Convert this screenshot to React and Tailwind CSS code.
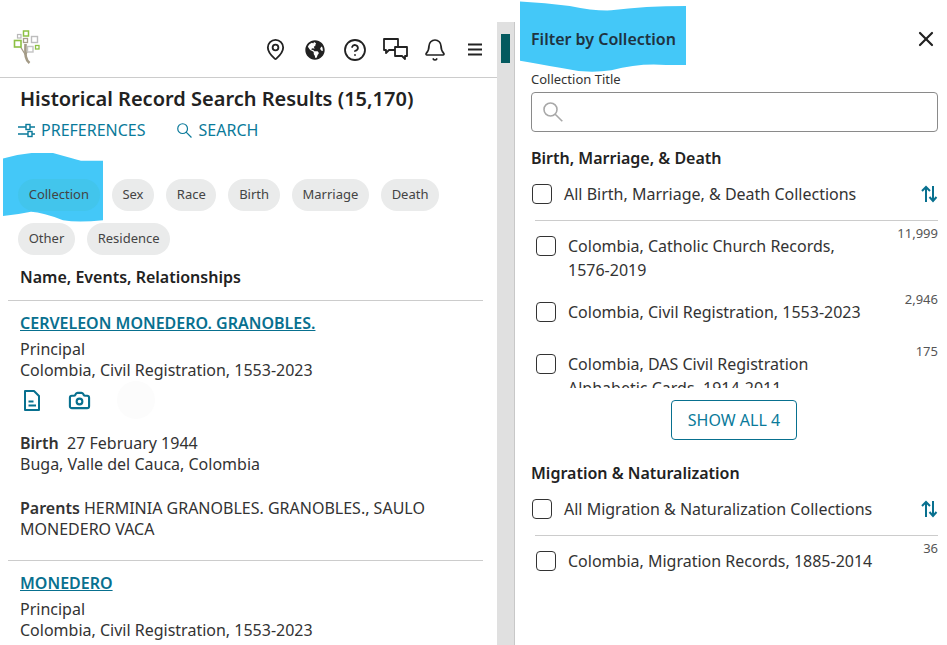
import { Bell, Camera, CircleHelp, MapPin, X } from 'lucide-react'
import { FaGlobeAmericas } from 'react-icons/fa'

const chipRows = [
  ['Collection', 'Sex', 'Race', 'Birth', 'Marriage', 'Death'],
  ['Other', 'Residence'],
]

function TreeLogo() {
  return (
    <svg width="28" height="34" viewBox="0 0 28 34" fill="none" className="mb-[5px]">
      <path d="M16.5 33C11.5 29 12.5 23 12.5 14" stroke="#a39a86" strokeWidth="2.6" />
      <path d="M12.5 25L7 16M13 24l3-5" stroke="#a39a86" strokeWidth="1.3" />
      <rect x="1.5" y="10.5" width="6.5" height="6.5" fill="white" stroke="#8dc044" strokeWidth="1.6" />
      <rect x="4.5" y="4.5" width="3.5" height="3.5" stroke="#b9b9b9" strokeWidth="1.2" />
      <rect x="10.5" y="1" width="5" height="5" stroke="#8dc044" strokeWidth="1.5" />
      <rect x="10.5" y="8.5" width="4" height="4" stroke="#a89f8c" strokeWidth="1.3" />
      <rect x="18.5" y="6.5" width="6" height="6" stroke="#bdbdbd" strokeWidth="1.4" />
      <rect x="14.5" y="16.5" width="5.5" height="5.5" fill="white" stroke="#c4c4c4" strokeWidth="1.4" />
      <rect x="22.5" y="15.5" width="3.5" height="3.5" stroke="#8dc044" strokeWidth="1.3" />
    </svg>
  )
}

function ChatIcon() {
  return (
    <svg width="25" height="23" viewBox="0 0 25 23" fill="none" stroke="#222" strokeWidth="1.8" strokeLinejoin="round">
      <path d="M1 1h14v11H6l-3 3v-3H1z" />
      <path d="M12 9h12v9h-2v3l-3-3h-7z" fill="white" />
    </svg>
  )
}

function MenuIcon() {
  return (
    <svg width="16" height="13" viewBox="0 0 16 13" stroke="#222" strokeWidth="2">
      <path d="M1 1.5h14M1 6.5h14M1 11.5h14" />
    </svg>
  )
}

function SlidersIcon() {
  return (
    <svg width="17" height="15" viewBox="0 0 17 15" fill="none" stroke="#0a7a9a" strokeWidth="1.4">
      <path d="M0 4h8M12 4h5M0 11h10M14 11h3" />
      <rect x="8" y="1.5" width="4" height="5" />
      <rect x="10" y="8.5" width="4" height="5" />
    </svg>
  )
}

function Magnifier({ size, color, className = '' }) {
  return (
    <svg width={size} height={size} viewBox="0 0 20 20" fill="none" stroke={color} strokeWidth="1.6" className={className}>
      <circle cx="7.5" cy="7.5" r="6.5" />
      <path d="M12.2 12.2L19.3 19.3" />
    </svg>
  )
}

function DocIcon() {
  return (
    <svg width="18" height="21" viewBox="0 0 18 21" fill="none" stroke="#08708f" strokeWidth="2" strokeLinejoin="round">
      <path d="M2 1h9l5 5v14H2z" />
      <path d="M5.5 11.5h5M5.5 15.5h7.5" />
    </svg>
  )
}

function SortIcon() {
  return (
    <svg width="17" height="18" viewBox="0 0 17 18" fill="none" stroke="#08708f" strokeWidth="2">
      <path d="M5 17V2M1 6l4-4 4 4" />
      <path d="M12 1v15M8.5 12l3.5 4 3.5-4" />
    </svg>
  )
}

function Scribble({ className, d }) {
  return (
    <svg className={className} viewBox="0 0 100 100" preserveAspectRatio="none">
      <path d={d} fill="#44c8f8" />
    </svg>
  )
}

function Box() {
  return <span className="block w-5 h-5 shrink-0 rounded-[4px] border border-[#333] bg-white" />
}

function CollectionRow({ label, count, className = '' }) {
  return (
    <div className={`flex items-start ${className}`}>
      <div className="pl-[5px] pt-[2px] shrink-0"><Box /></div>
      <div className="ml-[12px] w-[308px] text-[16px] leading-[24px] text-[#333]">{label}</div>
      <div className="ml-auto -mt-[9px] text-[13px] leading-[16px] text-[#555]">{count}</div>
    </div>
  )
}

function AllRow({ label }) {
  return (
    <div className="flex items-center justify-between h-[24px]">
      <div className="flex items-center gap-[12px] pl-[1px] text-[16px] text-[#333]">
        <Box />
        {label}
      </div>
      <SortIcon />
    </div>
  )
}

function Results() {
  return (
    <div className="w-[497px] shrink-0 pt-[22px] overflow-hidden">
      <header className="h-[56px] border-b border-[#cccccc] flex items-center justify-between pl-[13px] pr-[2px]">
        <TreeLogo />
        <div className="flex items-center">
          <div className="w-[40px] flex justify-center"><MapPin size={23} color="#222" strokeWidth={1.9} /></div>
          <div className="w-[40px] flex justify-center"><FaGlobeAmericas size={20} color="#222" /></div>
          <div className="w-[40px] flex justify-center"><CircleHelp size={24} color="#222" strokeWidth={1.8} /></div>
          <div className="w-[40px] flex justify-center"><ChatIcon /></div>
          <div className="w-[40px] flex justify-center"><Bell size={24} color="#222" strokeWidth={1.7} /></div>
          <div className="w-[40px] flex justify-center"><MenuIcon /></div>
        </div>
      </header>

      <h1 className="pl-[20px] mt-[7px] text-[20px] leading-[28px] font-semibold text-[#222]">
        Historical Record Search Results (15,170)
      </h1>
      <div className="flex items-center pl-[18px] mt-[5px] h-[24px] text-[16px] text-[#0a7a9a]">
        <SlidersIcon />
        <span className="ml-[6px]">PREFERENCES</span>
        <Magnifier size={15} color="#0a7a9a" className="ml-[31px]" />
        <span className="ml-[7px]">SEARCH</span>
      </div>

      <div className="relative pl-[18px] mt-[37px]">
        <Scribble
          className="absolute left-[3px] -top-[26px] w-[100px] h-[70px]"
          d="M0 8 Q25 -3 50 0 Q70 8 78 11 L100 11 L100 96 Q75 100 60 96 Q40 85 28 84 Q15 88 0 90Z"
        />
        {chipRows.map((row, i) => (
          <div key={i} className={`relative flex gap-[12px] ${i ? 'mt-[12px]' : ''}`}>
            {row.map((c, j) => (
              <span
                key={c}
                className={`h-[32px] px-[10.7px] flex items-center rounded-full text-[13px] text-[#444] ${i === 0 && j === 0 ? 'bg-[#42c5ec]' : 'bg-[#eaebeb]'}`}
              >
                {c}
              </span>
            ))}
          </div>
        ))}
      </div>

      <h2 className="pl-[20px] mt-[10px] text-[16px] leading-[24px] font-semibold text-[#222]">
        Name, Events, Relationships
      </h2>

      <div className="ml-[8px] mr-[14px] mt-[11px] border-t border-[#cccccc]" />

      <div className="px-[20px] pt-[10px] pb-[20px] text-[16px] leading-[21px] text-[#333]">
        <a className="block leading-[24px] font-semibold text-[#08708f] underline">CERVELEON MONEDERO. GRANOBLES.</a>
        <p className="mt-[4px]">Principal</p>
        <p>Colombia, Civil Registration, 1553-2023</p>
        <div className="flex items-center mt-[8px] h-[22px] pl-[3px]">
          <DocIcon />
          <Camera size={23} color="#08708f" strokeWidth={2.2} className="ml-[27px]" />
          <span className="ml-[26px] w-[38px] h-[38px] rounded-full bg-[#fcfcfc]" />
        </div>
        <p className="mt-[22px]"><b className="font-semibold">Birth</b>&nbsp; 27 February 1944</p>
        <p>Buga, Valle del Cauca, Colombia</p>
        <p className="mt-[23px] w-[440px]"><b className="font-semibold">Parents</b> HERMINIA GRANOBLES. GRANOBLES., SAULO MONEDERO VACA</p>
      </div>

      <div className="ml-[8px] mr-[14px] border-t border-[#cccccc]" />

      <div className="px-[20px] pt-[10px] text-[16px] leading-[21px] text-[#333]">
        <a className="block leading-[24px] font-semibold text-[#08708f] underline">MONEDERO</a>
        <p className="mt-[4px]">Principal</p>
        <p>Colombia, Civil Registration, 1553-2023</p>
      </div>
    </div>
  )
}

function Filters() {
  return (
    <aside className="relative flex-1 pl-[16px] pr-[9px]">
      <Scribble
        className="absolute left-[5px] top-0 w-[166px] h-[74px]"
        d="M0 2 Q15 4 30 8 Q45 15 55 14 Q75 8 100 8 L100 88 L88 88 Q72 85 55 95 Q40 100 25 92 Q10 86 0 82Z"
      />
      <div className="relative h-[71px] flex items-center justify-between pt-[7px]">
        <h2 className="text-[16px] font-semibold text-[#1f3340]">Filter by Collection</h2>
        <X size={24} color="#222" strokeWidth={2.2} />
      </div>
      <label className="block text-[13px] leading-[16px] text-[#333]">Collection Title</label>
      <div className="mt-[5px] h-[40px] rounded-[4px] border border-[#8a8a8a] flex items-center pl-[11px]">
        <Magnifier size={20} color="#a8a8a8" />
      </div>

      <h3 className="mt-[14px] text-[16px] leading-[24px] font-semibold text-[#222]">Birth, Marriage, &amp; Death</h3>
      <div className="mt-[12px]"><AllRow label="All Birth, Marriage, & Death Collections" /></div>
      <div className="ml-[4px] mt-[14px] border-t border-[#cccccc]" />

      <div className="h-[167px] overflow-hidden pt-[13px]">
        <CollectionRow label="Colombia, Catholic Church Records, 1576-2019" count="11,999" />
        <CollectionRow label="Colombia, Civil Registration, 1553-2023" count="2,946" className="mt-[18px]" />
        <CollectionRow label="Colombia, DAS Civil Registration Alphabetic Cards, 1914-2011" count="175" className="mt-[28px]" />
      </div>

      <div className="flex justify-center mt-[12px] pr-[2px]">
        <button className="w-[126px] h-[40px] pl-[1px] rounded-[4px] border border-[#08708f] text-[16px] text-[#0a7a9a]">SHOW ALL 4</button>
      </div>

      <h3 className="mt-[21px] text-[16px] leading-[24px] font-semibold text-[#222]">Migration &amp; Naturalization</h3>
      <div className="mt-[12px]"><AllRow label="All Migration & Naturalization Collections" /></div>
      <div className="ml-[4px] mt-[14px] border-t border-[#cccccc]" />
      <div className="pt-[13px]">
        <CollectionRow label="Colombia, Migration Records, 1885-2014" count="36" />
      </div>
    </aside>
  )
}

export default function App() {
  return (
    <div className="flex w-[947px] h-[645px] overflow-hidden bg-white font-['Noto_Sans',sans-serif]">
      <Results />
      <div className="mt-[22px] w-[18px] shrink-0 bg-[#e0e0e0] border-r border-[#c8c8c8] pl-[4px] pt-[12px]">
        <div className="w-[9px] h-[29px] bg-[#045a5f]" />
      </div>
      <Filters />
    </div>
  )
}
